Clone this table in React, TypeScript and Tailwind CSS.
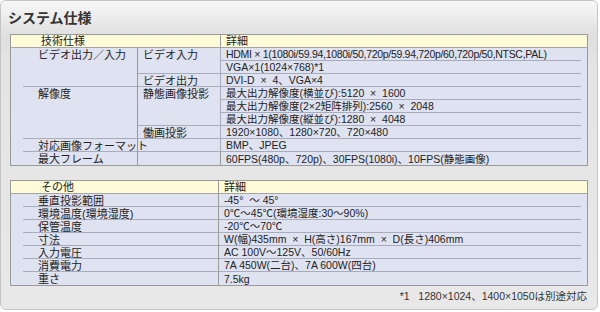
const line = 'border-b border-[#a9adbb]';
const cell = 'flex items-center leading-[12px] text-[#222] whitespace-pre';

// col1: ラベル, col2: サブ項目, col3: 詳細
const Col1 = ({ text, span = 1, last = false }: { text: string; span?: number; last?: boolean }) => (
  <div className="border-r border-[#9a9a9a] pl-3" style={{ gridRow: `span ${span}` }}>
    <div className={`${cell} text-[11px] h-full pl-[15px] items-start pt-[1px] ${last ? '' : line}`}>{text}</div>
  </div>
);

const Col2 = ({ text, span = 1, last = false }: { text: string; span?: number; last?: boolean }) => (
  <div
    className={`${cell} text-[11px] items-start pt-[1px] pl-[5px] border-r border-[#9a9a9a] ${last ? '' : line}`}
    style={{ gridRow: `span ${span}` }}
  >
    {text}
  </div>
);

const Col3 = ({ text, last = false, tight = false }: { text: string; last?: boolean; tight?: boolean }) => (
  <div className="pr-[6px]">
    <div className={`${cell} text-[10.5px] h-full pl-[5px] ${tight ? 'tracking-[-0.3px]' : ''} ${last ? '' : line}`}>{text}</div>
  </div>
);

const Header = ({ left, wide }: { left: string; wide: boolean }) => (
  <div className={`grid ${wide ? 'grid-cols-[127px_83px_1fr]' : 'grid-cols-[208px_1fr]'} h-[13px] bg-[#fdfbd8] border-b border-[#a5a5a5]`}>
    <div className={`${cell} text-[11px] pl-[30px] border-r border-[#9a9a9a] ${wide ? 'col-span-2' : ''}`}>{left}</div>
    <div className={`${cell} text-[11px] pl-[5px]`}>詳細</div>
  </div>
);

const sonota = [
  ['垂直投影範囲', '-45°  ～ 45°'],
  ['環境温度(環境湿度)', '0℃～45℃(環境湿度:30～90%)'],
  ['保管温度', '-20℃～70℃'],
  ['寸法', 'W(幅)435mm  ×  H(高さ)167mm  ×  D(長さ)406mm'],
  ['入力電圧', 'AC 100V～125V、50/60Hz'],
  ['消費電力', '7A 450W(二台)、7A 600W(四台)'],
  ['重さ', '7.5kg'],
];

export default function App() {
  return (
    <div className="w-[600px] h-[312px] bg-white [font-family:'Liberation_Sans','Noto_Sans_CJK_JP',sans-serif]">
      <div className="w-[598px] h-[310px] rounded-[6px] border border-[#c4c4c4] bg-[linear-gradient(#f8f8f8,#dedede_36px,#e4e4e4_60px,#e8e8e8)] px-[9px]">
        <div className="h-[33px] flex items-center">
          <h1 className="text-[14px] leading-[16px] font-bold text-[#333] -ml-[2px]">システム仕様</h1>
        </div>

        {/* 技術仕様 */}
        <div className="border border-[#9a9a9a] bg-[#dfe2f1]">
          <Header left="技術仕様" wide />
          <div className="grid grid-cols-[127px_83px_1fr] auto-rows-[13px]">
            <Col1 text="ビデオ出力／入力" span={3} />
            <Col2 text="ビデオ入力" span={2} />
            <Col3 tight text="HDMI × 1(1080i/59.94,1080i/50,720p/59.94,720p/60,720p/50,NTSC,PAL)" />
            <Col3 text="VGA×1(1024×768)*1" />
            <Col2 text="ビデオ出力" />
            <Col3 text="DVI-D  ×  4、VGA×4" />

            <Col1 text="解像度" span={4} />
            <Col2 text="静態画像投影" span={3} />
            <Col3 text="最大出力解像度(横並び):5120  ×  1600" />
            <Col3 text="最大出力解像度(2×2矩阵排列):2560  ×  2048" />
            <Col3 text="最大出力解像度(縦並び):1280  ×  4048" />
            <Col2 text="働画投影" />
            <Col3 text="1920×1080、1280×720、720×480" />

            <Col1 text="対応画像フォーマット" />
            <Col2 text="" />
            <Col3 text="BMP、JPEG" />

            <Col1 text="最大フレーム" last />
            <Col2 text="" last />
            <Col3 text="60FPS(480p、720p)、30FPS(1080i)、10FPS(静態画像)" last />
          </div>
        </div>

        {/* その他 */}
        <div className="mt-[14px] border border-[#9a9a9a] bg-[#dfe2f1]">
          <Header left="その他" wide={false} />
          <div className="grid grid-cols-[208px_1fr] auto-rows-[13px]">
            {sonota.map(([k, v], i) => (
              <div key={k} className="contents">
                <Col1 text={k} last={i === sonota.length - 1} />
                <Col3 text={v} last={i === sonota.length - 1} />
              </div>
            ))}
          </div>
        </div>

        <p className="mt-[4px] text-right pr-[1px] text-[10.5px] leading-[12px] text-[#333] whitespace-pre">
          *1   1280×1024、1400×1050は別途対応
        </p>
      </div>
    </div>
  );
}
